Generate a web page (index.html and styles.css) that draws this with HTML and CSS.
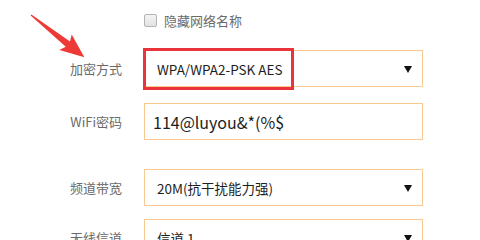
FILE: index.html
```html
<!DOCTYPE html>
<html lang="zh-CN">
<head>
<meta charset="utf-8">
<title>无线设置</title>
<link rel="stylesheet" href="styles.css">
</head>
<body>
<div class="page">
  <div class="form">
    <div class="row row-check">
      <span class="label"></span>
      <label class="check"><span class="box"></span><span class="check-text">隐藏网络名称</span></label>
    </div>
    <div class="row row-enc">
      <span class="label">加密方式</span>
      <div class="field select">
        <span class="value">WPA/WPA2-PSK AES</span>
        <span class="caret"></span>
        <span class="highlight"></span>
      </div>
    </div>
    <div class="row row-pwd">
      <span class="label">WiFi密码</span>
      <div class="field input"><span class="value">114@luyou&amp;*(%$</span></div>
    </div>
    <div class="row row-bw">
      <span class="label">频道带宽</span>
      <div class="field select">
        <span class="value">20M(抗干扰能力强)</span>
        <span class="caret"></span>
      </div>
    </div>
    <div class="row row-ch">
      <span class="label">无线信道</span>
      <div class="field select">
        <span class="value">信道 1</span>
        <span class="caret"></span>
      </div>
    </div>
  </div>
  <svg class="arrow" width="480" height="240" viewBox="0 0 480 240" aria-hidden="true">
    <g transform="translate(31 15) rotate(38.3)">
      <polygon points="0,-0.6 47,-3.4 44,-10 68,0 44,10 47,3.4 0,0.6" fill="#ee3a36"/>
    </g>
  </svg>
</div>
</body>
</html>
```
FILE: styles.css
```css
html, body {
  margin: 0;
  padding: 0;
  background: #ffffff;
}
.page {
  position: relative;
  width: 480px;
  height: 240px;
  overflow: hidden;
  font-family: "Noto Sans CJK SC", "Noto Sans", sans-serif;
}
.form {
  display: flex;
  flex-direction: column;
  padding-top: 12px;
}
.row {
  display: flex;
  align-items: center;
}
.label {
  width: 122px;
  margin-right: 22px;
  text-align: right;
  font-size: 13px;
  color: #6a6a6a;
  flex: none;
}
.row-check { height: 16px; }
.row-enc { margin-top: 22px; }
.row-pwd { margin-top: 16px; }
.row-bw { margin-top: 29px; }
.row-ch { margin-top: 13px; }

.check {
  display: flex;
  align-items: center;
  gap: 7px;
}
.box {
  width: 11px;
  height: 11px;
  border: 1px solid #b4b4b4;
  border-radius: 2px;
  background: linear-gradient(#f4f4f4, #e2e2e2);
}
.check-text {
  font-size: 13px;
  color: #6a6a6a;
}
.field {
  position: relative;
  width: 279px;
  height: 37px;
  box-sizing: border-box;
  border: 1px solid #f8ca91;
  display: flex;
  align-items: center;
  background: #ffffff;
}
.select .value {
  padding-left: 12px;
  font-size: 13.5px;
  color: #1e1e1e;
}
.input .value {
  padding-left: 8px;
  font-size: 16px;
  color: #1e1e1e;
}
.caret {
  position: absolute;
  right: 10px;
  top: 50%;
  margin-top: -3px;
  width: 0;
  height: 0;
  border-left: 4px solid transparent;
  border-right: 4px solid transparent;
  border-top: 7px solid #111111;
}
.highlight {
  position: absolute;
  left: -2px;
  top: -3px;
  width: 151px;
  height: 42px;
  box-sizing: border-box;
  border: 3px solid #e8343a;
}
.arrow {
  position: absolute;
  left: 0;
  top: 0;
  pointer-events: none;
}
```
